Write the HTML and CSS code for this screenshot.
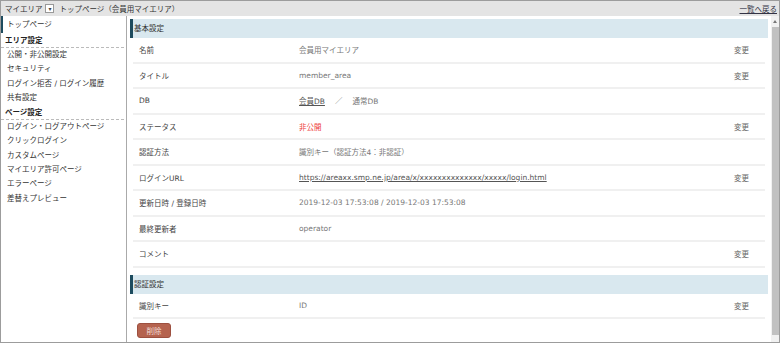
FILE: index.html
```html
<!DOCTYPE html>
<html lang="ja">
<head>
    <meta charset="UTF-8">
    <title>マイエリア - トップページ</title>
    <link rel="stylesheet" href="styles.css">
</head>
<body>
    <div class="frame">
        <!-- header bar -->
        <div class="topbar">
            <div class="crumb">
                <span>マイエリア</span>
                <span class="dd">&#9662;</span>
                <span class="page-name">トップページ（会員用マイエリア）</span>
            </div>
            <a class="back" href="#">一覧へ戻る</a>
        </div>

        <div class="body">
            <div class="sidebar">
                <a class="side-top" href="#">トップページ</a>

                <div class="side-head">エリア設定</div>
                <a class="side-item" href="#">公開・非公開設定</a>
                <a class="side-item" href="#">セキュリティ</a>
                <a class="side-item" href="#">ログイン拒否 / ログイン履歴</a>
                <a class="side-item" href="#">共有設定</a>

                <div class="side-head">ページ設定</div>
                <a class="side-item" href="#">ログイン・ログアウトページ</a>
                <a class="side-item" href="#">クリックログイン</a>
                <a class="side-item" href="#">カスタムページ</a>
                <a class="side-item" href="#">マイエリア許可ページ</a>
                <a class="side-item" href="#">エラーページ</a>
                <a class="side-item" href="#">差替えプレビュー</a>
            </div>

            <div class="main">
                <div class="section-title">基本設定</div>
                <div class="row">
                    <div class="label">名前</div>
                    <div class="value">会員用マイエリア</div>
                    <a class="edit" href="#">変更</a>
                </div>
                <div class="row">
                    <div class="label">タイトル</div>
                    <div class="value">member_area</div>
                    <a class="edit" href="#">変更</a>
                </div>
                <div class="row">
                    <div class="label">DB</div>
                    <div class="value"><a class="link" href="#">会員DB</a><span class="sep">／</span>通常DB</div>
                </div>
                <div class="row">
                    <div class="label">ステータス</div>
                    <div class="value closed">非公開</div>
                    <a class="edit" href="#">変更</a>
                </div>
                <div class="row">
                    <div class="label">認証方法</div>
                    <div class="value">識別キー（認証方法4：非認証）</div>
                </div>
                <div class="row">
                    <div class="label">ログインURL</div>
                    <div class="value"><a class="link" href="#">https://areaxx.smp.ne.jp/area/x/xxxxxxxxxxxxxx/xxxxx/login.html</a></div>
                    <a class="edit" href="#">変更</a>
                </div>
                <div class="row">
                    <div class="label">更新日時 / 登録日時</div>
                    <div class="value">2019-12-03 17:53:08 / 2019-12-03 17:53:08</div>
                </div>
                <div class="row">
                    <div class="label">最終更新者</div>
                    <div class="value">operator</div>
                </div>
                <div class="row">
                    <div class="label">コメント</div>
                    <div class="value"></div>
                    <a class="edit" href="#">変更</a>
                </div>

                <div class="section-title second">認証設定</div>
                <div class="row">
                    <div class="label">識別キー</div>
                    <div class="value">ID</div>
                    <a class="edit" href="#">変更</a>
                </div>

                <button class="delete">削除</button>
            </div>

            <div class="scrollbar">
                <span class="arrow-up"></span>
                <span class="thumb"></span>
            </div>
        </div>
    </div>
</body>
</html>
```

FILE: styles.css
```css
* {
    box-sizing: border-box;
    margin: 0;
    padding: 0;
}

html, body {
    width: 780px;
    height: 343px;
    overflow: hidden;
}

body {
    font-family: "DejaVu Sans", "Noto Sans CJK JP", sans-serif;
    font-size: 7.5px;
    color: #444;
    background: #fff;
}

a {
    color: inherit;
    text-decoration: none;
}

.frame {
    width: 780px;
    height: 343px;
    border: 1px solid #9c9c9c;
    display: flex;
    flex-direction: column;
}

/* top bar */
.topbar {
    height: 15px;
    background: #e4e4e4;
    display: flex;
    align-items: center;
    justify-content: space-between;
    padding: 0 2px 0 4px;
    color: #333;
}

.crumb {
    display: flex;
    align-items: center;
}

.dd {
    width: 9px;
    height: 9px;
    margin-left: 3px;
    border: 1px solid #999;
    background: #fff;
    font-size: 6px;
    line-height: 7px;
    text-align: center;
    color: #444;
}

.page-name {
    margin-left: 5px;
}

.back {
    color: #334;
    text-decoration: underline;
}

.body {
    flex: 1;
    display: flex;
    min-height: 0;
}

/* sidebar */
.sidebar {
    width: 126px;
    border-right: 1px solid #aaa;
    display: flex;
    flex-direction: column;
    color: #333;
}

.side-top {
    height: 17px;
    line-height: 17px;
    padding-left: 4px;
    border-left: 2px solid #1d4b5e;
}

.side-head {
    padding: 1px 0 0 4px;
    line-height: 13px;
    font-weight: bold;
    color: #222;
    border-bottom: 1px dashed #bbb;
    margin-right: 2px;
}

.side-item {
    line-height: 14.3px;
    padding-left: 6px;
}

/* main */
.main {
    flex: 1;
    padding: 3px 3px 0;
    display: flex;
    flex-direction: column;
}

.section-title {
    height: 19px;
    line-height: 19px;
    background: #d9e8ef;
    border-left: 3px solid #1d4b5e;
    padding-left: 1px;
    color: #333;
}

.section-title.second {
    margin-top: 7px;
}

.row {
    height: 25.5px;
    margin: 0 3px;
    border-bottom: 2px solid #f0f0f0;
    display: flex;
    align-items: center;
    padding: 0 16px 0 6px;
}

.label {
    width: 160px;
    color: #444;
}

.value {
    flex: 1;
    color: #777;
}

.value a.link {
    color: #555;
    text-decoration: underline;
}

.sep {
    margin: 0 10px;
    color: #888;
}

.closed {
    color: #ee3a3a;
}

.edit {
    color: #666;
}

.delete {
    align-self: flex-start;
    margin: 4px 0 0 7px;
    width: 34px;
    height: 15px;
    background: #b5634f;
    border: 1px solid #9d5040;
    border-radius: 3px;
    color: #f3ddd6;
    font-family: inherit;
    font-size: 7.5px;
}

/* fake scrollbar */
.scrollbar {
    width: 8px;
    background: #f1f1f1;
    display: flex;
    flex-direction: column;
    align-items: center;
    padding-top: 4px;
}

.arrow-up {
    width: 0;
    height: 0;
    border-left: 2px solid transparent;
    border-right: 2px solid transparent;
    border-bottom: 3px solid #777;
}

.thumb {
    width: 7px;
    flex: 1;
    margin: 4px 0 7px;
    background: #c1c1c1;
}
```
